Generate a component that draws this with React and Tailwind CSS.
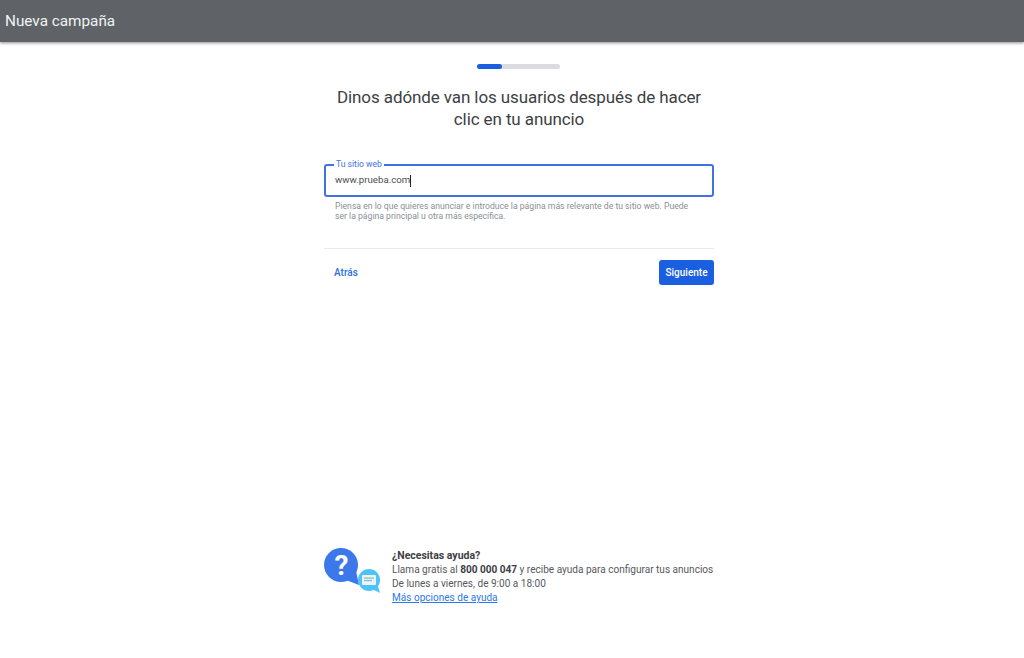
import React from 'react';

const HelpIcon = () => (
  <svg width="58" height="46" viewBox="0 0 58 46" className="shrink-0">
    <circle cx="17" cy="17" r="17" fill="#3c78ea" />
    <path d="M22 32l13 5-3-14z" fill="#3c78ea" />
    <text x="17.500" y="27" textAnchor="middle" fontSize="28" fontWeight="700" fill="#fff" fontFamily="Roboto, sans-serif">?</text>
    <circle cx="45" cy="32" r="11" fill="#4fc3f7" />
    <path d="M48 41l8 4-3-10z" fill="#4fc3f7" />
    <rect x="38" y="27" width="14" height="10" rx="1" fill="#e8f5fb" />
    <rect x="40" y="29.500" width="10" height="1.200" fill="#8ab9a8" />
    <rect x="40" y="32" width="8" height="1.200" fill="#8ab9cc" />
  </svg>
);

export default function App() {
  return (
    <div className="min-h-[658px] bg-white font-['Roboto',sans-serif] text-[#3c4043]">
      <header className="h-[42px] bg-[#5f6367] flex items-center pl-[5px] shadow-[0_1px_3px_rgba(0,0,0,0.45)]">
        <h1 className="text-[15.3px] text-[#f1f3f4] font-normal">Nueva campaña</h1>
      </header>

      <div className="flex justify-center pl-[14px]">
        <main className="w-[390px]">
          <div className="flex justify-center pt-[22px] pr-[2px]">
            <div className="w-[83px] h-[5px] rounded-full bg-[#dadce0]">
              <div className="w-[25px] h-[5px] rounded-full bg-[#1a5fe0]" />
            </div>
          </div>

          <h2 className="mt-[17px] text-[17px] leading-[22px] tracking-[-0.1px] text-center font-normal text-[#3c4043]">
            Dinos adónde van los usuarios después de hacer
            <br />
            clic en tu anuncio
          </h2>

          <div className="relative mt-[34px] h-[33px] border-2 border-[#3f73df] rounded-[3px] pl-[9px] flex items-center">
            <span className="absolute -top-[8px] left-[8px] bg-white px-[2px] text-[8.6px] leading-[12px] text-[#3f73df]">Tu sitio web</span>
            <span className="text-[9.7px] text-[#4a4e52]">www.prueba.com</span>
            <span className="w-px h-[12px] bg-[#202124]" />
          </div>

          <p className="mt-[4px] pl-[11px] pr-[22px] text-[8.65px] leading-[10px] text-[#8a8f94]">
            Piensa en lo que quieres anunciar e introduce la página más relevante de tu sitio web. Puede ser la página principal u otra más específica.
          </p>

          <div className="mt-[27px] border-t border-[#e8eaed]" />

          <div className="mt-[11px] flex items-center justify-between">
            <button className="pl-[10px] text-[10px] font-medium text-[#2a6fe0]">Atrás</button>
            <button className="w-[55px] h-[25px] rounded-[3px] bg-[#1a5fe0] text-[10px] font-medium text-white">Siguiente</button>
          </div>

          <div className="mt-[263px] flex gap-[10px]">
            <HelpIcon />
            <div className="pt-px text-[10.05px] leading-[14px] text-[#55595d]">
              <p className="font-bold text-[10.5px] text-[#3c4043]">¿Necesitas ayuda?</p>
              <p>Llama gratis al <b className="text-[#3c4043]">800 000 047</b> y recibe ayuda para configurar tus anuncios</p>
              <p>De lunes a viernes, de 9:00 a 18:00</p>
              <a className="text-[#2a7ae8] underline" href="#">Más opciones de ayuda</a>
            </div>
          </div>
        </main>
      </div>
    </div>
  );
}
